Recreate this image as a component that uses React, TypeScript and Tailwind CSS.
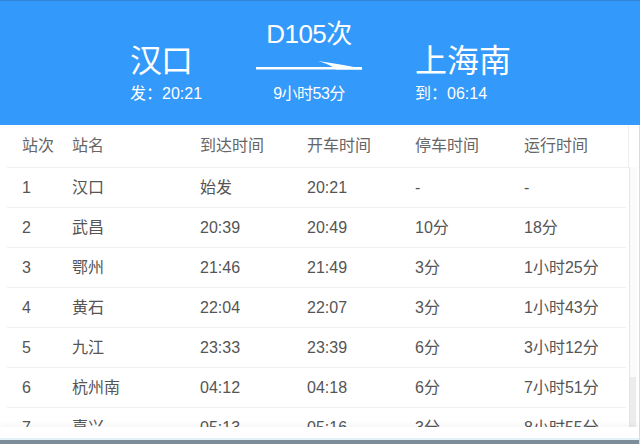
const font = { fontFamily: '"Liberation Sans", Arial, "Noto Sans CJK SC", sans-serif' }

const stops = [
  ["1", "汉口", "始发", "20:21", "-", "-"],
  ["2", "武昌", "20:39", "20:49", "10分", "18分"],
  ["3", "鄂州", "21:46", "21:49", "3分", "1小时25分"],
  ["4", "黄石", "22:04", "22:07", "3分", "1小时43分"],
  ["5", "九江", "23:33", "23:39", "6分", "3小时12分"],
  ["6", "杭州南", "04:12", "04:18", "6分", "7小时51分"],
  ["7", "嘉兴", "05:13", "05:16", "3分", "8小时55分"],
]

const headers = ["站次", "站名", "到达时间", "开车时间", "停车时间", "运行时间"]

const cols = "grid grid-cols-[50px_128px_107px_108px_109px_1fr] items-center"

function Arrow() {
  return (
    <svg width="108" height="12" viewBox="0 0 108 12" className="block">
      <rect x="0" y="7" width="106" height="2.5" fill="#fff" />
      <path d="M62 1 C80 4 96 6 107 9.5 L80 9.5 C76 6 70 3 62 1 Z" fill="#fff" />
    </svg>
  )
}

export default function App() {
  return (
    <div className="w-[640px] h-[444px] overflow-hidden bg-white flex flex-col" style={font}>
      {/* header */}
      <div className="h-[125px] shrink-0 bg-[#3399fb] border-t border-[#2f86d6] text-white flex pl-[130px]">
        <div className="w-[126px] pt-[40px]">
          <div className="text-[32px] leading-[40px] tracking-[-1px]">汉口</div>
          <div className="text-[16px] leading-[20px] mt-[3px]">发：20:21</div>
        </div>
        <div className="w-[106px] flex flex-col items-center pt-[17px]">
          <div className="text-[26px] leading-[32px] tracking-[-0.5px]">D105次</div>
          <div className="mt-[10px] ml-[2px]">
            <Arrow />
          </div>
          <div className="text-[16px] leading-[20px] mt-[12px] tracking-[-0.5px]">9小时53分</div>
        </div>
        <div className="ml-[53px] pt-[40px]">
          <div className="text-[32px] leading-[40px]">上海南</div>
          <div className="text-[16px] leading-[20px] mt-[3px]">到：06:14</div>
        </div>
      </div>

      {/* table */}
      <div className="flex-1 flex flex-col border-r border-[#d3dde6]">
        <div className="h-[302px] shrink-0 flex overflow-hidden pr-[2px]">
          <div className="flex-1 text-[16px] text-[#555]">
            <div className={`${cols} h-[43px] border-b border-[#f0f0f0] ml-[7px] pl-[15px] text-[#666] border-r border-r-[#eeeeee]`}>
              {headers.map((h) => (
                <div key={h}>{h}</div>
              ))}
            </div>
            {stops.map((row) => (
              <div key={row[0]} className={`${cols} h-[40px] border-b border-[#f0f0f0] ml-[7px] mr-[3px] pl-[15px]`}>
                {row.map((cell, i) => (
                  <div key={i}>{cell}</div>
                ))}
              </div>
            ))}
          </div>
          <div className="w-[8px] shrink-0 pt-[42px] flex flex-col">
            <div className="flex-1 border-l border-[#e6e6e6] bg-[#fbfbfb] flex flex-col pt-[210px]">
              <div className="h-[52px] w-[6px] bg-[#ececec]" />
            </div>
          </div>
        </div>
        <div className="flex-1 bg-white shadow-[0_-3px_4px_rgba(0,0,0,0.03)]" />
        <div className="h-[2px] bg-[#e3f1fb]" />
        <div className="h-[4px] bg-[#7d8c99]" />
      </div>
    </div>
  )
}
